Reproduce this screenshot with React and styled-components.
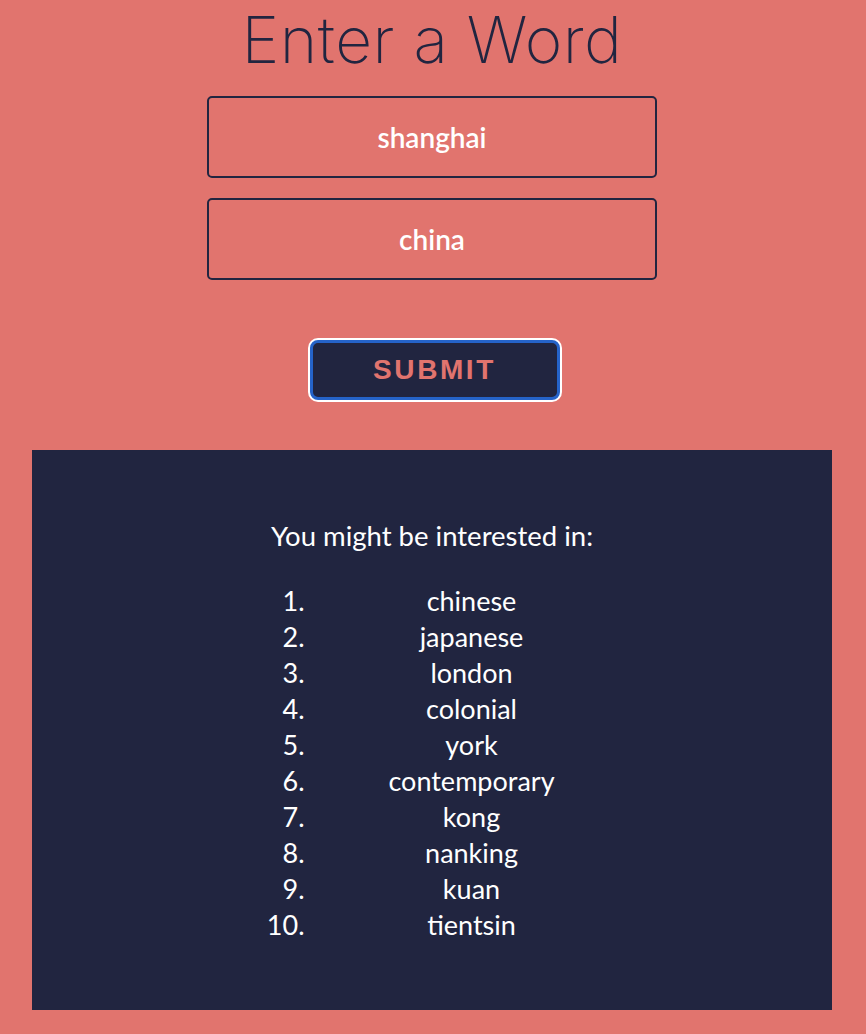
import React from 'react';
import styled, { createGlobalStyle } from 'styled-components';

const GlobalStyle = createGlobalStyle`
  html, body {
    margin: 0;
    padding: 0;
    background-color: #e1746e;
  }
  body {
    font-family: Lato, "Open Sans", sans-serif;
  }
`;

const Page = styled.div`
  display: flex;
  flex-direction: column;
  align-items: center;
  padding: 0 34px 24px 32px;
`;

const Title = styled.h1`
  margin: 0;
  font-family: Inter, sans-serif;
  font-weight: 200;
  font-size: 64px;
  line-height: 80px;
  color: #212540;
  letter-spacing: 0.5px;
`;

const Form = styled.form`
  display: flex;
  flex-direction: column;
  align-items: center;
  gap: 20px;
  margin-top: 16px;
`;

const WordInput = styled.input`
  box-sizing: border-box;
  width: 450px;
  height: 82px;
  border: 2px solid #212540;
  border-radius: 5px;
  background: transparent;
  color: #ffffff;
  font-family: Lato, sans-serif;
  font-weight: 600;
  font-size: 28px;
  text-align: center;
  outline: none;
`;

const SubmitButton = styled.button`
  box-sizing: border-box;
  margin: 40px 0 0 5px;
  width: 250px;
  height: 60px;
  border: 3px solid #2563c9;
  border-radius: 8px;
  box-shadow: 0 0 0 2px #ffffff;
  background-color: #212540;
  color: #e1746e;
  font-family: "Liberation Sans", Arial, sans-serif;
  font-weight: 700;
  font-size: 28px;
  letter-spacing: 2.6px;
  cursor: pointer;
`;

const Results = styled.section`
  box-sizing: border-box;
  align-self: stretch;
  margin-top: 50px;
  height: 560px;
  background-color: #212540;
  color: #ffffff;
  padding-top: 68px;
  display: flex;
  flex-direction: column;
  align-items: center;
`;

const ResultsTitle = styled.p`
  margin: 0;
  font-size: 27.5px;
  line-height: 36px;
`;

const List = styled.ol`
  list-style: none;
  margin: 29px 0 0 32px;
  padding: 0;
  display: flex;
  flex-direction: column;
`;

const Item = styled.li`
  display: grid;
  grid-template-columns: 40px 320px;
  column-gap: 7px;
  font-size: 27px;
  line-height: 36px;
`;

const Num = styled.span`
  text-align: right;
`;

const Word = styled.span`
  text-align: center;
`;

const words = ['chinese', 'japanese', 'london', 'colonial', 'york', 'contemporary', 'kong', 'nanking', 'kuan', 'tientsin'];

const App = () => (
  <>
    <GlobalStyle />
    <Page>
      <Title>Enter a Word</Title>
      <Form onSubmit={e => e.preventDefault()}>
        <WordInput type="text" defaultValue="shanghai" />
        <WordInput type="text" defaultValue="china" />
        <SubmitButton type="submit">SUBMIT</SubmitButton>
      </Form>
      <Results>
        <ResultsTitle>You might be interested in:</ResultsTitle>
        <List>
          {words.map((w, i) => (
            <Item key={w}>
              <Num>{i + 1}.</Num>
              <Word>{w}</Word>
            </Item>
          ))}
        </List>
      </Results>
    </Page>
  </>
);

export default App;
